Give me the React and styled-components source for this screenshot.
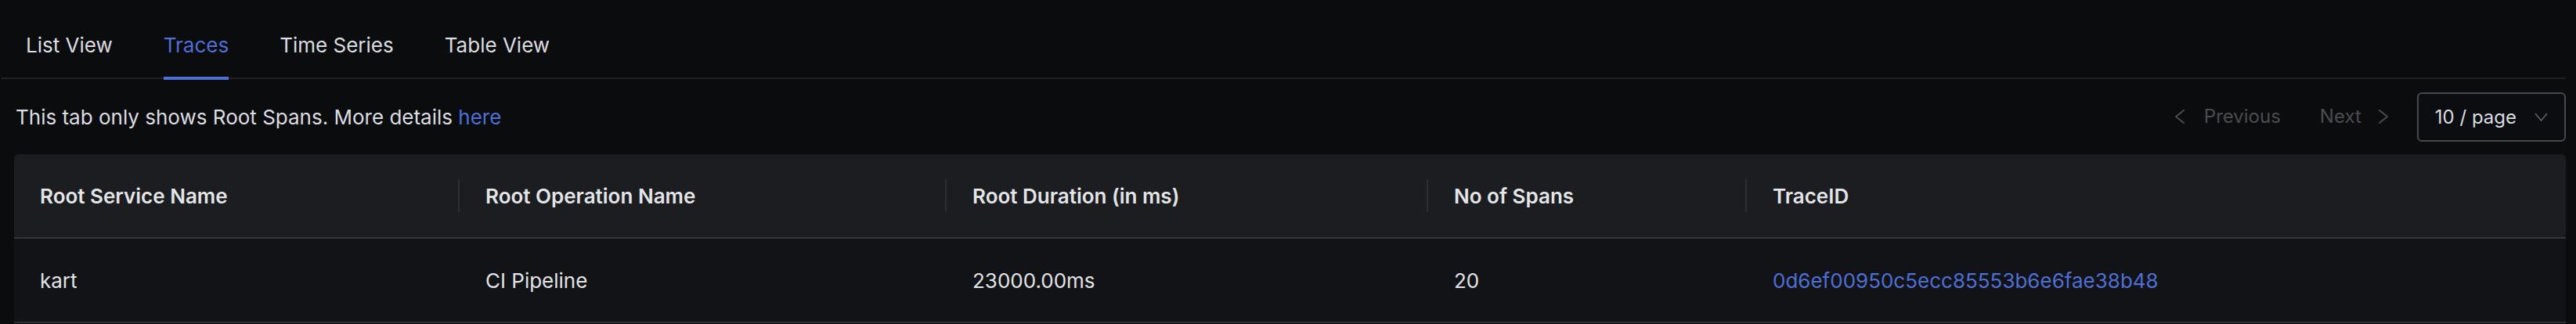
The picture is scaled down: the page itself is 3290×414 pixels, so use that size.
import React from "react";
import styled, { createGlobalStyle } from "styled-components";

const Global = createGlobalStyle`
  html, body { margin: 0; padding: 0; background: #0b0c0e; }
  body { font-family: Inter, "Noto Sans", sans-serif; color: #e2e3e5; -webkit-font-smoothing: antialiased; }
  * { box-sizing: border-box; }
`;

const Page = styled.div`
  width: 3290px;
  height: 414px;
  overflow: hidden;
  padding: 0 13px 0 2px;
  display: flex;
  flex-direction: column;
`;

const TabNav = styled.div`
  display: flex;
  gap: 65px;
  height: 101px;
  padding-left: 31px;
  border-bottom: 2px solid #202127;
`;

const Tab = styled.div`
  position: relative;
  padding-top: 37px;
  font-size: 26px;
  line-height: 41px;
  color: ${(p) => (p.$active ? "#4e6fd6" : "#dcdde0")};
  &::after {
    content: "";
    display: ${(p) => (p.$active ? "block" : "none")};
    position: absolute;
    left: 0;
    right: 0;
    bottom: -3px;
    height: 4px;
    background: #4e6fd6;
  }
`;

const Content = styled.div`
  padding-left: 16px;
  display: flex;
  flex-direction: column;
`;

const InfoRow = styled.div`
  height: 96px;
  display: flex;
  align-items: center;
  justify-content: space-between;
  padding-left: 2px;
`;

const Note = styled.div`
  font-size: 26px;
  line-height: 41px;
  color: #dcdde0;
`;

const Link = styled.a`
  color: #4e6fd6;
  text-decoration: none;
`;

const Pager = styled.div`
  display: flex;
  align-items: center;
`;

const PagerButton = styled.div`
  display: flex;
  align-items: center;
  gap: ${(p) => p.$inner}px;
  font-size: 24px;
  line-height: 40px;
  color: #4a4c51;
  margin-right: ${(p) => p.$gap || 0}px;
`;

const Select = styled.div`
  height: 63px;
  display: flex;
  align-items: center;
  gap: 23px;
  padding: 0 21px;
  border: 2px solid #46484d;
  border-radius: 6px;
  font-size: 24px;
  color: #dcdde0;
  background: #0c0d10;
`;

const Table = styled.div`
  display: grid;
  grid-template-columns: 569px 622px 615px 407px 1fr;
  border-radius: 6px 6px 0 0;
  overflow: hidden;
`;

const HeadCell = styled.div`
  position: relative;
  height: 108px;
  display: flex;
  align-items: center;
  padding: 0 32px 0 33px;
  background: #1c1d21;
  border-bottom: 2px solid #33353a;
  font-size: 26px;
  font-weight: 600;
  color: #e4e5e7;
  &::before {
    content: "";
    display: ${(p) => (p.$last ? "none" : "block")};
    position: absolute;
    right: 0;
    top: 50%;
    width: 2px;
    height: 42px;
    transform: translateY(-50%);
    background: #2c2e33;
  }
`;

const Cell = styled.div`
  height: 108px;
  display: flex;
  align-items: center;
  padding: 0 32px 0 33px;
  background: #121317;
  border-bottom: 2px solid #2a2c31;
  font-size: 26px;
  color: ${(p) => (p.$link ? "#4e6fd6" : "#e2e3e5")};
`;

const Chevron = ({ dir }) => (
  <svg width="14" height="18" viewBox="0 0 14 18" fill="none">
    <polyline
      points={dir === "left" ? "12,1 2,9 12,17" : "2,1 12,9 2,17"}
      stroke="#4a4c51"
      strokeWidth="2"
      strokeLinecap="round"
      strokeLinejoin="round"
    />
  </svg>
);

const Down = () => (
  <svg width="17" height="11" viewBox="0 0 17 11" fill="none">
    <polyline points="1,1 8.5,10 16,1" stroke="#5b5d62" strokeWidth="1.8" strokeLinejoin="round" />
  </svg>
);

const columns = ["Root Service Name", "Root Operation Name", "Root Duration (in ms)", "No of Spans", "TraceID"];
const row = ["kart", "CI Pipeline", "23000.00ms", "20", "0d6ef00950c5ecc85553b6e6fae38b48"];

export default function App() {
  return (
    <>
      <Global />
      <Page>
        <TabNav>
          <Tab>List View</Tab>
          <Tab $active>Traces</Tab>
          <Tab>Time Series</Tab>
          <Tab>Table View</Tab>
        </TabNav>
        <Content>
          <InfoRow>
            <Note>
              This tab only shows Root Spans. More details <Link href="#">here</Link>
            </Note>
            <Pager>
              <PagerButton $gap={50} $inner={24}>
                <Chevron dir="left" />
                Previous
              </PagerButton>
              <PagerButton $gap={36} $inner={21}>
                Next
                <Chevron dir="right" />
              </PagerButton>
              <Select>
                10 / page
                <Down />
              </Select>
            </Pager>
          </InfoRow>
          <Table>
            {columns.map((c, i) => (
              <HeadCell key={c} $last={i === columns.length - 1}>
                {c}
              </HeadCell>
            ))}
            {row.map((v, i) => (
              <Cell key={i} $link={i === row.length - 1}>
                {v}
              </Cell>
            ))}
          </Table>
        </Content>
      </Page>
    </>
  );
}
